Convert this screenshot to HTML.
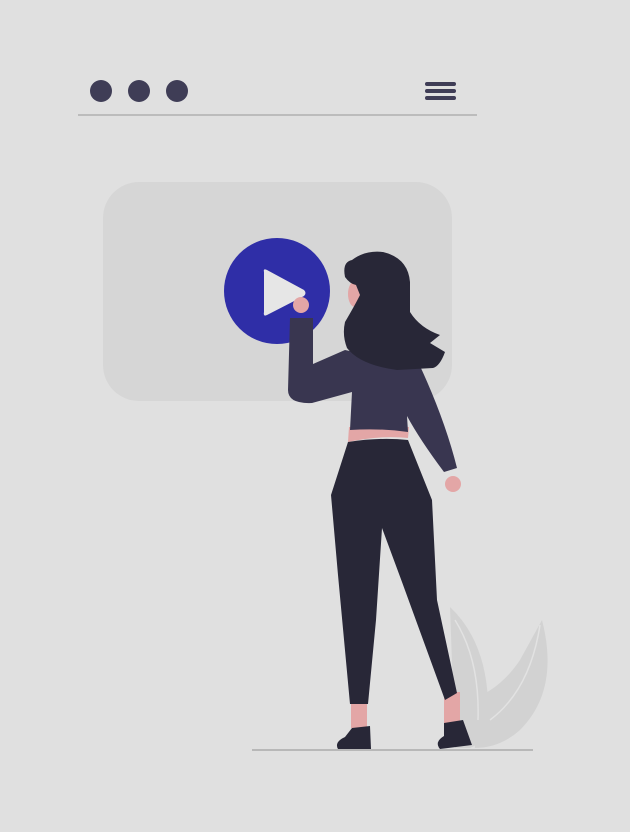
<!DOCTYPE html>
<html><head><meta charset="utf-8"><style>html,body{margin:0;padding:0;background:#e0e0e0}svg{display:block}</style></head>
<body>
<svg width="630" height="832" viewBox="0 0 630 832" xmlns="http://www.w3.org/2000/svg">
<rect width="630" height="832" fill="#e0e0e0"/>
<circle cx="101" cy="91" r="11" fill="#3f3d56"/>
<circle cx="139" cy="91" r="11" fill="#3f3d56"/>
<circle cx="177" cy="91" r="11" fill="#3f3d56"/>
<rect x="425" y="82" width="31" height="4" rx="2" fill="#3f3d56"/>
<rect x="425" y="89" width="31" height="4" rx="2" fill="#3f3d56"/>
<rect x="425" y="96" width="31" height="4" rx="2" fill="#3f3d56"/>
<rect x="78" y="114" width="399" height="2" fill="#bcbcbc"/>
<rect x="103" y="182" width="349" height="219" rx="36" fill="#d6d6d6"/>
<circle cx="277" cy="291" r="53" fill="#2f2ea7"/>
<path d="M264 272 Q263 268 267 270 L304 290 Q307 293 304 296 L267 315 Q263 317 264 312 Z" fill="#e6e6e6"/>
<path d="M450 607 Q485 640 488 700 Q490 740 470 748 L455 748 Z" fill="#d2d2d2"/>
<path d="M542 620 Q560 690 520 730 Q500 748 475 748 L470 700 Q500 690 520 660 Z" fill="#d2d2d2"/>
<path d="M455 620 Q480 660 478 720 M540 625 Q530 690 490 720" stroke="#e2e2e2" stroke-width="1.5" fill="none"/>
<rect x="252" y="749" width="281" height="2" fill="#b8b8b8"/>
<path d="M349 427 L409 427 L408 438 Q380 435 348 442 Z" fill="#e3a6a6"/>
<rect x="351" y="700" width="16" height="28" fill="#e3a6a6"/>
<rect x="444" y="692" width="16" height="32" fill="#e3a6a6"/>
<circle cx="453" cy="484" r="8" fill="#e3a6a6"/>
<circle cx="301" cy="305" r="8" fill="#e3a6a6"/>
<ellipse cx="355" cy="294" rx="7" ry="13" fill="#e3a6a6"/>
<path d="M290 318 L313 318 L313 364 L345 350 L420 366 Q445 420 457 468 L444 472 Q420 440 407 416 L408 432 Q380 428 350 430 L352 392 L312 403 Q288 404 288 390 Z" fill="#393650"/>
<path d="M348 442 Q380 437 408 440 L432 500 L437 600 L457 693 L445 700 L402 582 L382 528 L376 620 L368 704 L350 704 L338 575 L331 495 Z" fill="#282737"/>
<path d="M352 728 L370 726 L371 749 L338 749 Q334 742 345 737 Z" fill="#282737"/>
<path d="M444 723 L463 720 L472 745 L440 749 Q434 742 444 736 Z" fill="#282737"/>
<path d="M345 277 Q342 262 352 260 Q365 250 383 252 Q408 258 410 282 L410 312 Q420 328 440 335 L430 343 L445 352 Q440 366 433 368 L397 370 Q360 365 347 348 Q342 335 345 322 Q355 305 360 295 L356 285 Q350 284 345 277 Z" fill="#282737"/>
</svg>
</body></html>
